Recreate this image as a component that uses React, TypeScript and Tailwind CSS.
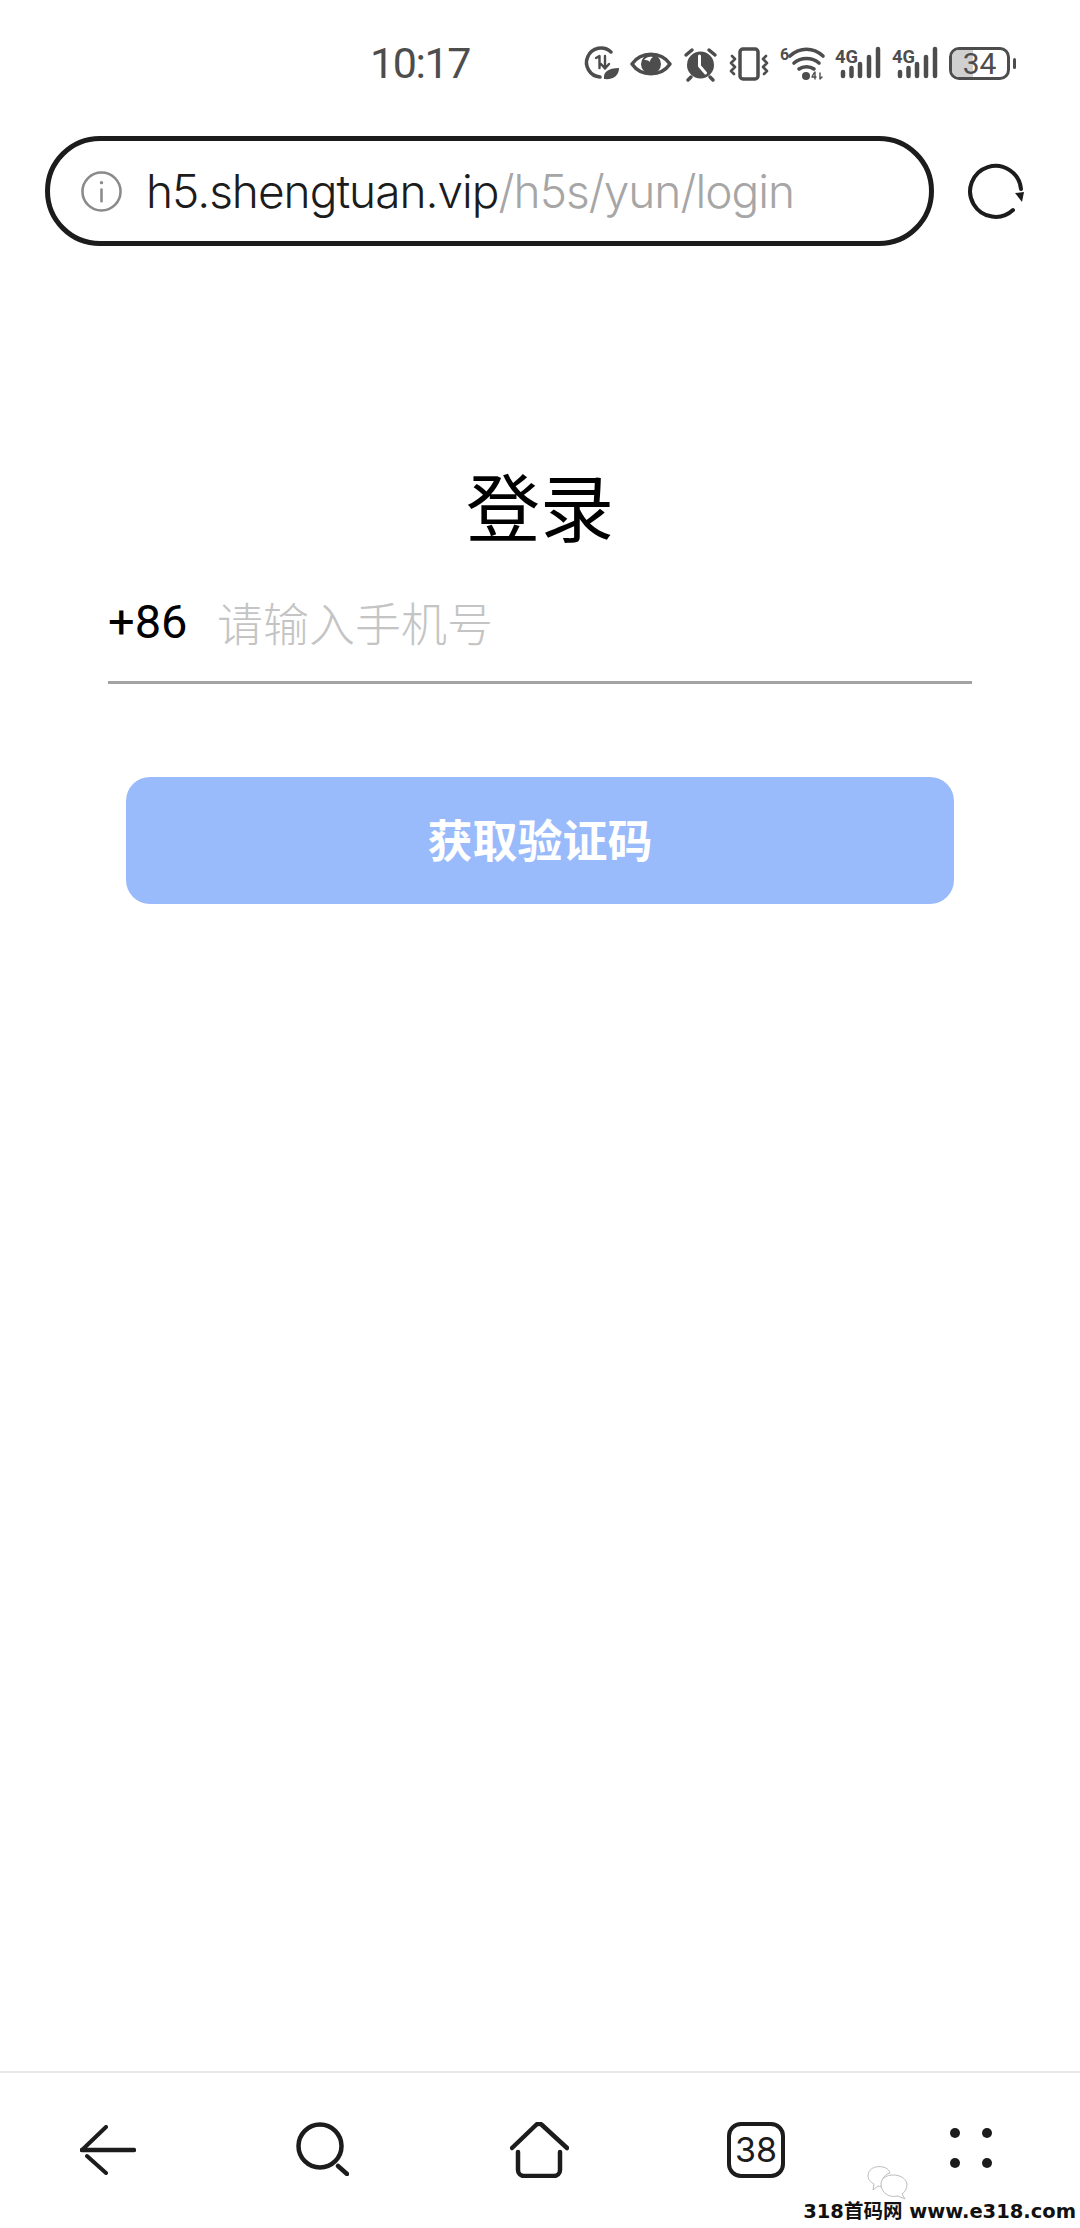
const INK = '#4d4d4d';

function Stat({ w, children }: { w: number; children: React.ReactNode }) {
  return (
    <svg className="overflow-visible" width={w} height="34" viewBox={`0 0 ${w} 34`} fill="none" stroke={INK} strokeWidth="3.5" strokeLinecap="round" strokeLinejoin="round">
      {children}
    </svg>
  );
}

function Signal() {
  return (
    <Stat w={46}>
      <text x="0" y="16" fontSize="19" fontWeight="700" fill={INK} stroke="none" textLength="23" lengthAdjust="spacingAndGlyphs" fontFamily="Roboto, sans-serif">4G</text>
      <path d="M8 29v-4M16.5 29v-8M25 29V17M34 29V10M43 29V2" strokeWidth="4.5" />
    </Stat>
  );
}

function StatusBar() {
  return (
    <div className="flex h-[92px] items-start pt-[47px]">
      <div className="ml-[370px] -mt-[5px] w-[217px] text-[43px] leading-none tracking-[-1.4px] text-[#4d4d4d]" style={{ fontFamily: 'Roboto, sans-serif' }}>10:17</div>
      <div className="flex items-start gap-[11px]">
        <Stat w={32}>
          <path d="M24 5a14.5 14.5 0 1 0-11 25" />
          <path d="M9 11l3.500-2v12M18 9v12M22 17l-4 4.500M14 17l4 4.500" strokeWidth="2.4" />
          <path d="M17 32c-1-7 4-11 15-11 0 7-5 12-15 11z" fill={INK} stroke="none" />
        </Stat>
        <Stat w={42}>
          <path d="M2 17C11 4 31 4 40 17 31 30 11 30 2 17z" />
          <circle cx="21" cy="17" r="10" fill={INK} stroke="none" />
          <path d="M14 13c2-3 6-4 9-3-2 1-3 3-3 5-2-2-4-2-6-2z" fill="#fff" stroke="none" />
        </Stat>
        <Stat w={35}>
          <circle cx="17.500" cy="18" r="13.500" fill={INK} stroke="none" />
          <path d="M16.500 9v10l6 7" stroke="#fff" strokeWidth="3" />
          <path d="M3 8l6-5M32 8l-6-5M8 30l-3 3M27 30l3 3" />
        </Stat>
        <Stat w={40}>
          <rect x="11" y="2" width="18" height="30" rx="3" />
          <path d="M3 9l3 3-4 4 4 4-4 4 3 3M37 9l-3 3 4 4-4 4 4 4-3 3" strokeWidth="2.6" />
        </Stat>
        <Stat w={44}>
          <text x="0" y="13" fontSize="16" fontWeight="700" fill={INK} stroke="none" fontFamily="Roboto, sans-serif">6</text>
          <path d="M10 9c10-9 23-9 33 0M14 16c7-6 18-6 25 0M19 22c4-3 11-3 15 0" strokeWidth="3.6" />
          <circle cx="26" cy="29" r="4" fill={INK} stroke="none" />
          <path d="M34 26l-2 4h4M35 25v7M40 26v6l2-2" strokeWidth="1.4" />
        </Stat>
        <Signal />
        <Signal />
        <div className="flex items-center">
          <div className="relative flex h-[33px] w-[61px] items-center justify-center overflow-hidden rounded-[10px] border-[3px] border-[#4d4d4d] text-[30px] leading-none text-[#4d4d4d]" style={{ fontFamily: 'Roboto, sans-serif' }}>
            <div className="absolute inset-y-0 left-0 w-[21px] bg-[#d0d0d0]" />
            <span className="relative">34</span>
          </div>
          <div className="ml-[3px] h-[11px] w-[3px] rounded-sm bg-[#4d4d4d]" />
        </div>
      </div>
    </div>
  );
}

function UrlBar() {
  return (
    <div className="mt-[44px] flex items-center pl-[45px]">
      <div className="flex h-[110px] w-[889px] items-center rounded-[55px] border-[5px] border-[#1c1c1c] pl-[31px]">
        <svg width="41" height="41" viewBox="0 0 42 42" fill="none" stroke="#8a8a8a" strokeWidth="2.6" strokeLinecap="round">
          <circle cx="21" cy="21" r="19.5" />
          <path d="M21 19v12" />
          <circle cx="21" cy="12" r="1.7" fill="#8a8a8a" stroke="none" />
        </svg>
        <div className="ml-[24px] whitespace-nowrap text-[46px] leading-none tracking-[-1px]" style={{ fontFamily: 'Inter, sans-serif', fontWeight: 300 }}>
          <span className="text-[#1c1c1c]">h5.shengtuan.vip</span>
          <span className="text-[#a6a6a6]">/h5s/yun/login</span>
        </div>
      </div>
      <svg className="ml-[33px]" width="58" height="56" viewBox="0 0 58 56" fill="none" stroke="#1c1c1c" strokeWidth="4" strokeLinecap="round">
        <path d="M54 26A25.500 25.500 0 1 0 46 47" />
        <path d="M48 30l9-1-2 10z" fill="#1c1c1c" stroke="none" />
      </svg>
    </div>
  );
}

function Login() {
  return (
    <div className="flex flex-col">
      <h1 className="mt-[214px] text-center text-[74px] font-normal leading-[88px] text-black" style={{ fontFamily: '"Noto Sans CJK SC", sans-serif' }}>登录</h1>
      <div className="mx-[108px] mt-[37px] flex h-[99px] items-start border-b-[3px] border-[#a3a3a3] pt-[9px]">
        <span className="w-[109px] text-[47px] font-normal leading-[56px] text-black" style={{ fontFamily: 'Roboto, sans-serif' }}>+86</span>
        <span className="text-[46px] font-light leading-[54px] text-[#c4c4c4]" style={{ fontFamily: '"Noto Sans CJK SC", sans-serif' }}>请输入手机号</span>
      </div>
      <button className="mx-[126px] mt-[93px] flex h-[127px] items-center justify-center rounded-[24px] bg-[#99bbfb] pb-[4px] text-[45px] font-bold leading-none text-white" style={{ fontFamily: '"Noto Sans CJK SC", sans-serif' }}>获取验证码</button>
    </div>
  );
}

function BottomBar() {
  return (
    <div className="relative mt-auto flex h-[157px] items-start border-t-[2px] border-[#e8e8e8] pt-[49px]">
      <svg className="ml-[80px] mt-[3px]" width="56" height="50" viewBox="0 0 56 50" fill="none" stroke="#1c1c1c" strokeWidth="4" strokeLinecap="round">
        <path d="M2 25h52" strokeWidth="4.500" />
        <path d="M2 25L26 2M7 31l19 17" />
      </svg>
      <svg className="ml-[160px]" width="53" height="54" viewBox="0 0 53 54" fill="none" stroke="#1c1c1c" strokeWidth="4.500" strokeLinecap="round">
        <circle cx="24" cy="24" r="21.500" />
        <path d="M42 44l9 8" />
      </svg>
      <svg className="ml-[161px]" width="59" height="56" viewBox="0 0 59 56" fill="none" stroke="#1c1c1c" strokeWidth="4.500" strokeLinecap="round" strokeLinejoin="round">
        <path d="M2 26L26 3a4 4 0 0 1 6 0l25 23" />
        <path d="M8 30v18a6 6 0 0 0 6 6h30a6 6 0 0 0 6-6V30" />
      </svg>
      <div className="ml-[158px] flex h-[56px] w-[58px] items-center justify-center rounded-[14px] border-[4.5px] border-[#1c1c1c] text-[34px] leading-none text-[#1c1c1c]" style={{ fontFamily: 'Inter, sans-serif' }}>38</div>
      <div className="ml-[165px] mt-[6px] grid grid-cols-2 gap-x-[22px] gap-y-[20px]">
        <div className="h-[10px] w-[10px] rounded-full bg-[#1c1c1c]" />
        <div className="h-[10px] w-[10px] rounded-full bg-[#1c1c1c]" />
        <div className="h-[10px] w-[10px] rounded-full bg-[#1c1c1c]" />
        <div className="h-[10px] w-[10px] rounded-full bg-[#1c1c1c]" />
      </div>
      <svg className="absolute left-[866px] top-[91px]" width="44" height="36" viewBox="0 0 44 36" fill="#fff" stroke="#bdbdbd" strokeWidth="1">
        <path d="M2 12C2 0 22 0 24 9c-7 2-9 8-8 14l-4-1-5 4 1-6c-4-2-6-5-6-8z" />
        <path d="M15 20c0-12 24-12 26 0 0 5-2 8-5 10l3 5-7-3c-9 2-17-3-17-12z" />
      </svg>
      <div className="absolute bottom-[7px] right-[4px] whitespace-nowrap text-[19.5px] font-bold leading-none text-[#111]" style={{ fontFamily: '"DejaVu Sans","Noto Sans CJK SC",sans-serif' }}>318首码网 www.e318.com</div>
    </div>
  );
}

export default function App() {
  return (
    <div className="flex h-[2228px] w-[1080px] flex-col overflow-hidden bg-white">
      <StatusBar />
      <UrlBar />
      <Login />
      <BottomBar />
    </div>
  );
}
